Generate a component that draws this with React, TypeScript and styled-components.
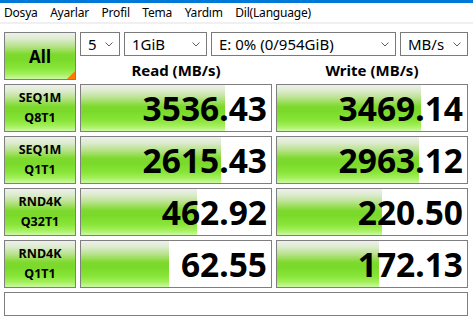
import { createGlobalStyle, styled } from "styled-components"

const GREEN = `linear-gradient(to bottom, #eef1ec 0%, #dbeacb 14%, #b4e283 30%, #7fd92f 46%, #7ada2a 58%, #8ae63a 78%, #a6f060 90%, #ccf8a4 100%)`

const GlobalStyle = createGlobalStyle`
  html, body { margin: 0; padding: 0; background: #fff; }
  body {
    width: 473px;
    height: 324px;
    overflow: hidden;
    font-family: "Noto Sans", "Open Sans", sans-serif;
    color: #000;
  }
`

const TitleStrip = styled.div`
  height: 3px;
  background: #0078d7;
`

const MenuBar = styled.div`
  display: flex;
  align-items: center;
  column-gap: 12.5px;
  height: 19px;
  padding-left: 4px;
  font-size: 12px;
  letter-spacing: -0.2px;
  border-bottom: 2px solid #f0f0f0;
`

const MenuItem = styled.span`
  white-space: nowrap;
`

const Main = styled.div`
  display: grid;
  grid-template-columns: 72px 192px 192px;
  grid-template-rows: 24px 20px repeat(4, 48px) 24px;
  gap: 4px;
  padding: 8px 0 0 4px;
`

const AllButton = styled.div`
  grid-row: 1 / 3;
  position: relative;
  box-sizing: border-box;
  border: 1px solid #7f7f7f;
  background: ${GREEN};
  display: flex;
  align-items: center;
  justify-content: center;
  font-size: 17px;
  font-weight: 700;

  &::after {
    content: "";
    position: absolute;
    right: 0;
    bottom: 0;
    border-style: solid;
    border-width: 0 0 8px 8px;
    border-color: transparent transparent #ff7a00 transparent;
  }
`

const Controls = styled.div`
  grid-column: 2 / 4;
  display: flex;
  column-gap: 4px;
`

const Select = styled.div<{ $w: number }>`
  width: ${p => p.$w}px;
  box-sizing: border-box;
  border: 1px solid #7a7a7a;
  display: flex;
  align-items: center;
  justify-content: space-between;
  padding: 0 6px 0 7px;
  font-size: 15px;
  white-space: nowrap;
`

const Header = styled.div`
  align-self: end;
  text-align: center;
  font-size: 15px;
  font-weight: 700;
  line-height: 20px;
`

const TestLabel = styled.div`
  box-sizing: border-box;
  border: 1px solid #7f7f7f;
  background: ${GREEN};
  display: flex;
  flex-direction: column;
  justify-content: center;
  align-items: center;
  font-size: 12.5px;
  font-weight: 700;
  line-height: 20px;
`

const Meter = styled.div<{ $fill: number }>`
  box-sizing: border-box;
  border: 1px solid #7f7f7f;
  background-color: #fff;
  background-image: ${GREEN};
  background-repeat: no-repeat;
  background-size: ${p => p.$fill}px 100%;
  text-align: right;
  padding-right: 4px;
  font-size: 33.5px;
  font-weight: 700;
  line-height: 46px;
`

const StatusBar = styled.div`
  grid-column: 1 / 4;
  box-sizing: border-box;
  border: 1px solid #7f7f7f;
`

const Chevron = () => (
  <svg width="8" height="5" viewBox="0 0 8 5">
    <path d="M0.5 0.5 L4 4 L7.5 0.5" fill="none" stroke="#606060" strokeWidth="1" />
  </svg>
)

const menu = ["Dosya", "Ayarlar", "Profil", "Tema", "Yardım", "Dil(Language)"]

const rows = [
  { a: "SEQ1M", b: "Q8T1", read: "3536.43", rf: 144, write: "3469.14", wf: 144 },
  { a: "SEQ1M", b: "Q1T1", read: "2615.43", rf: 140, write: "2963.12", wf: 142 },
  { a: "RND4K", b: "Q32T1", read: "462.92", rf: 116, write: "220.50", wf: 105 },
  { a: "RND4K", b: "Q1T1", read: "62.55", rf: 88, write: "172.13", wf: 102 },
]

export default function App() {
  return (
    <>
      <GlobalStyle />
      <TitleStrip />
      <MenuBar>
        {menu.map(m => <MenuItem key={m}>{m}</MenuItem>)}
      </MenuBar>
      <Main>
        <AllButton>All</AllButton>
        <Controls>
          <Select $w={40}>5<Chevron /></Select>
          <Select $w={83}>1GiB<Chevron /></Select>
          <Select $w={185}>E: 0% (0/954GiB)<Chevron /></Select>
          <Select $w={68}>MB/s<Chevron /></Select>
        </Controls>
        <Header>Read (MB/s)</Header>
        <Header>Write (MB/s)</Header>
        {rows.map((r, i) => (
          <>
            <TestLabel key={"l" + i}>
              <span>{r.a}</span>
              <span>{r.b}</span>
            </TestLabel>
            <Meter key={"r" + i} $fill={r.rf}>{r.read}</Meter>
            <Meter key={"w" + i} $fill={r.wf}>{r.write}</Meter>
          </>
        ))}
        <StatusBar />
      </Main>
    </>
  )
}
